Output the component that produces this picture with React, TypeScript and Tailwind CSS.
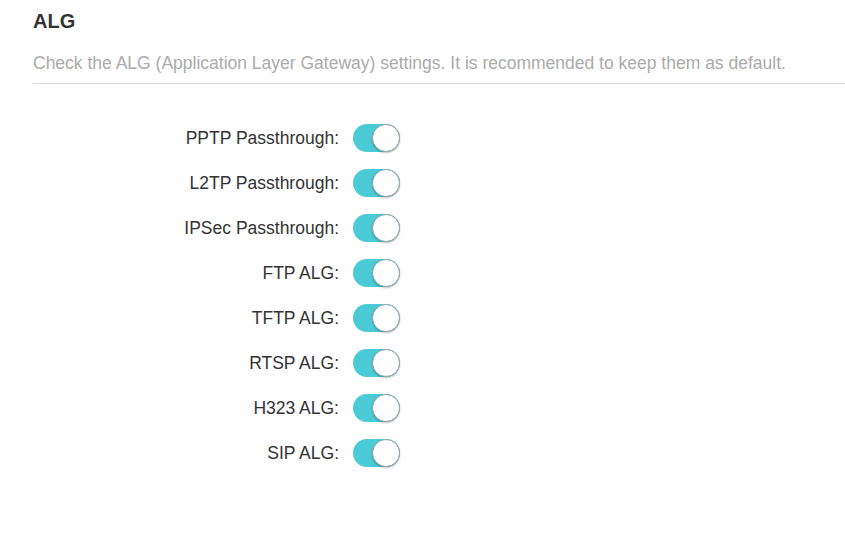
import React from 'react';

const items = [
  'PPTP Passthrough:',
  'L2TP Passthrough:',
  'IPSec Passthrough:',
  'FTP ALG:',
  'TFTP ALG:',
  'RTSP ALG:',
  'H323 ALG:',
  'SIP ALG:',
];

const Toggle: React.FC = () => (
  <div className="relative w-[47px] h-[28px] rounded-full bg-[#4acbd6]">
    <div className="absolute right-0 top-0 w-[28px] h-[28px] rounded-full bg-white border border-[#9aa4a6] shadow-[0_1px_2px_rgba(0,0,0,0.25)]" />
  </div>
);

export default function App() {
  return (
    <div className="w-[845px] h-[538px] bg-white pl-[33px] pt-[9px] font-['Liberation_Sans',Arial,sans-serif]">
      <h1 className="text-[20px] leading-[24px] font-bold text-[#333]">ALG</h1>
      <p className="mt-[20px] text-[17.5px] leading-[20px] text-[#ababab]">
        Check the ALG (Application Layer Gateway) settings. It is recommended to keep them as default.
      </p>
      <div className="mt-[10px] border-t border-[#dcdcdc]" />
      <div className="mt-[40px] flex flex-col gap-[17px]">
        {items.map((label) => (
          <div key={label} className="flex items-center">
            <span className="w-[320px] text-right text-[17.5px] text-[#333] pr-[14px]">{label}</span>
            <Toggle />
          </div>
        ))}
      </div>
    </div>
  );
}
